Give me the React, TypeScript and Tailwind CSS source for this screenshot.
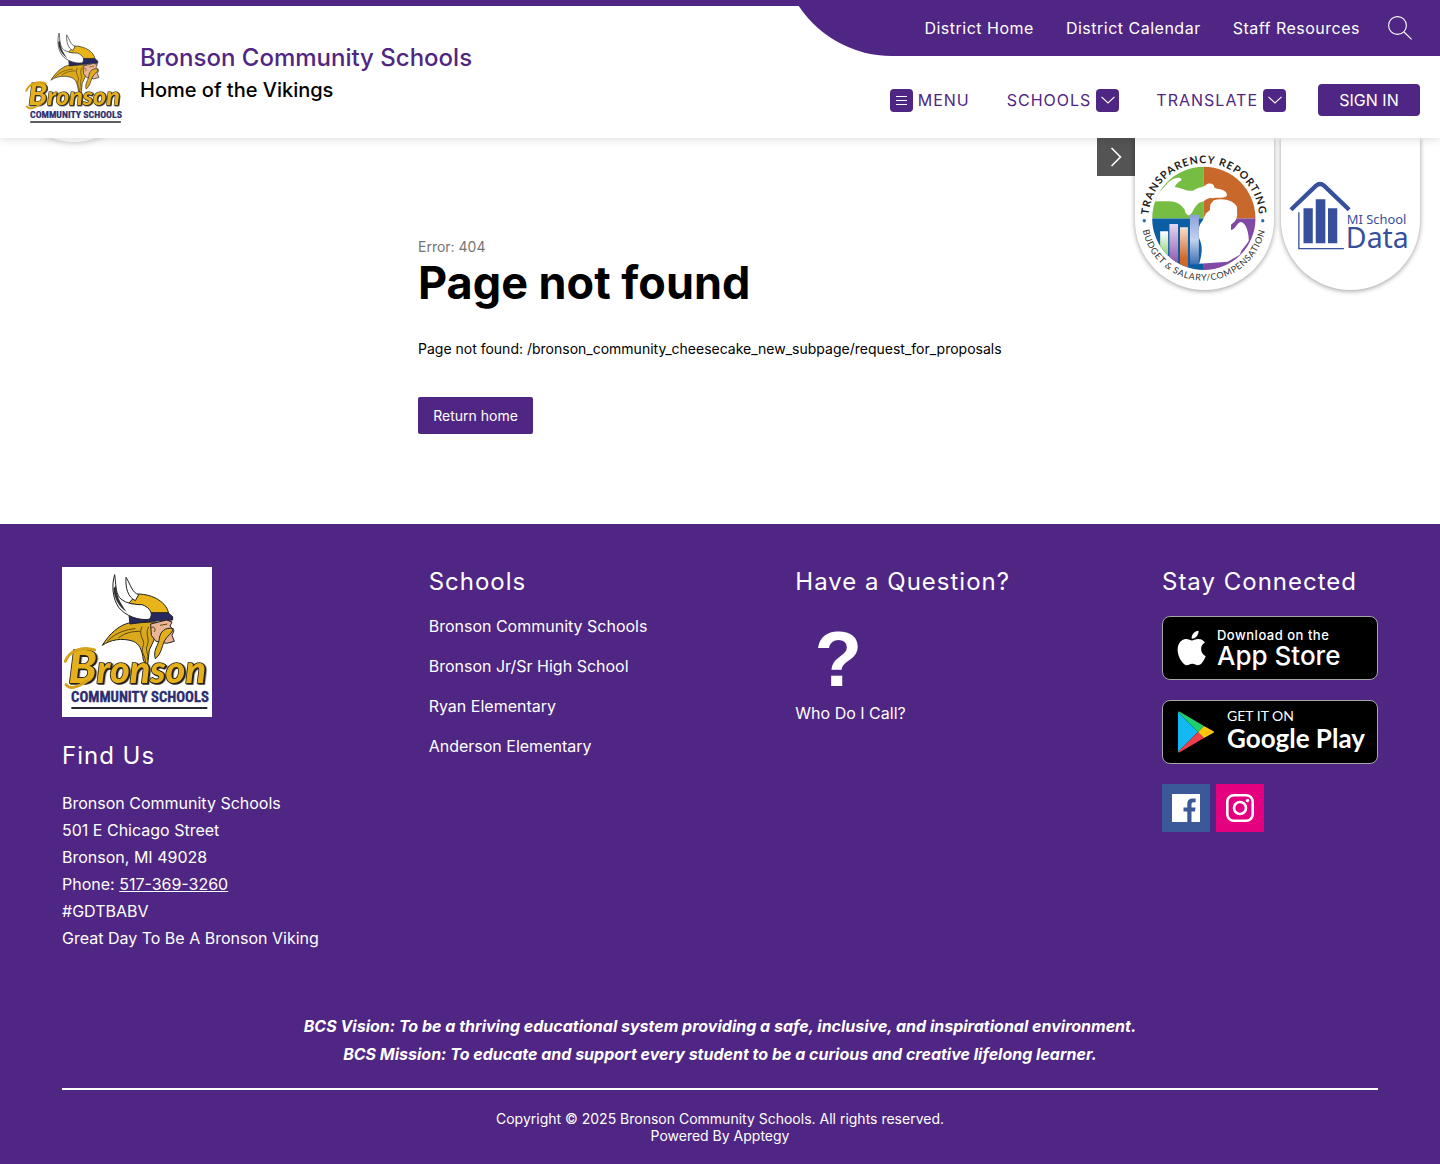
import React from "react";

const schools = [
  "Bronson Community Schools",
  "Bronson Jr/Sr High School",
  "Ryan Elementary",
  "Anderson Elementary",
];

function VikingLogo({ className }: { className: string }) {
  return (
    <svg viewBox="36 21 450 450" className={className} role="img" aria-label="Bronson Community Schools logo">
      <rect x="36" y="21" width="450" height="450" fill="#fff" />
      <g stroke="#222" strokeWidth="3" strokeLinejoin="round">
        <path d="M262 102C310 102 352 128 356 162L300 160C290 140 265 134 236 130Z" fill="#e8b41a" />
        <path d="M240 188C205 196 178 222 157 256C180 240 215 232 250 244C268 252 276 268 280 300L292 322L298 270L312 240L318 186Z" fill="#dba91c" />
        <path d="M237 166L240 192L304 184L368 180V170L354 158L302 158Z" fill="#27285f" />
        <path d="M302 192L350 180L366 186L360 198L372 212L366 226L373 244L350 250L318 244L304 226Z" fill="#e9b596" />
        <path d="M370 206C345 200 330 216 328 236C326 256 308 270 316 296C334 282 334 262 344 242C350 228 366 222 370 206Z" fill="#e2ae1b" />
        <path d="M194 44C184 76 188 116 206 142C226 168 266 182 298 178C312 162 300 142 276 134C242 134 220 126 208 112C196 96 198 70 194 44Z" fill="#fff" />
        <path d="M228 52C226 84 234 112 256 122L266 104C246 98 242 74 228 52Z" fill="#fff" />
      </g>
      <g fill="none" stroke="#5b4713" strokeWidth="3">
        <path d="M172 244C200 216 230 208 256 206M205 234C225 218 246 214 270 214M276 200C262 230 290 240 278 262C272 280 290 290 286 312M296 200C284 224 300 232 292 256C284 270 298 284 292 300" />
        <path d="M302 204C312 196 320 208 312 216M330 196L352 192" />
      </g>
      <path d="M190 84C192 116 206 140 230 156C208 124 200 108 198 78Z" fill="#333" />
      <text
        x="55"
        y="368"
        fontFamily="Lato, sans-serif"
        fontWeight="900"
        fontStyle="italic"
        fontSize="113"
        fill="#e5b01c"
        stroke="#27231a"
        strokeWidth="5"
        paintOrder="stroke"
        className="drop-shadow-[4px_3px_0_#27231a]"
      >
        <tspan fontSize="138">B</tspan>ronson
      </text>
      <path d="M46 304C58 272 96 258 134 270M48 374C60 390 86 380 112 362" fill="none" stroke="#d6a41c" strokeWidth="9" strokeLinecap="round" />
      <text x="270" y="427" textAnchor="middle" fontFamily="'Roboto Condensed', 'Liberation Sans Narrow', Roboto, sans-serif" fontWeight="700" fontSize="44" fill="#2c2d70" stroke="#2c2d70" strokeWidth="1">
        COMMUNITY SCHOOLS
      </text>
      <path d="M64 444H472" stroke="#26272f" strokeWidth="6" />
    </svg>
  );
}

function TransparencyLogo() {
  return (
    <svg viewBox="0 0 420 459" className="w-full" role="img" aria-label="Transparency Reporting, Budget and Salary/Compensation">
      <defs>
        <clipPath id="disc"><circle cx="208" cy="243" r="156" /></clipPath>
        <path id="arc-top" d="M41 243A167 167 0 0 1 375 243" />
        <path id="arc-bottom" d="M20 243A188 188 0 0 0 396 243" />
        <linearGradient id="g1" x2="0" y2="1"><stop stopColor="#fff" /><stop offset="1" stopColor="#6fbf44" /></linearGradient>
        <linearGradient id="g2" x2="0" y2="1"><stop stopColor="#e4d8f0" /><stop offset="1" stopColor="#7b3fa0" /></linearGradient>
        <linearGradient id="g3" x2="0" y2="1"><stop stopColor="#f7e0d0" /><stop offset=".7" stopColor="#d2692a" /></linearGradient>
        <linearGradient id="g4" x2="0" y2="1"><stop stopColor="#8b9fdb" /><stop offset=".5" stopColor="#c3d2ee" /><stop offset="1" stopColor="#3a6db0" /></linearGradient>
      </defs>
      <g clipPath="url(#disc)">
        <path d="M50 84H208V243H50Z" fill="#76bd43" />
        <path d="M208 84H366V243H208Z" fill="#c8682a" />
        <path d="M50 243H208V402H50Z" fill="#0b5da4" />
        <path d="M208 243H366V402H208Z" fill="#804aa5" />
        <path d="M76 160C90 150 94 138 106 130C124 116 144 118 140 128C128 134 122 144 120 148C146 152 160 164 178 158C190 148 206 150 214 142C224 134 240 138 240 150C256 156 276 154 278 172C276 184 246 178 234 182C216 178 210 196 196 194C180 206 178 218 170 228C162 240 152 230 150 216C136 198 126 194 112 192C90 190 70 192 44 192Z" fill="#fff" />
        <path d="M238 188C268 180 300 190 308 208C308 232 314 246 290 262L290 278C306 276 306 256 320 254C336 256 344 288 344 310C334 328 318 340 318 352L280 374L194 380C202 350 206 330 194 304C190 280 192 262 204 250L214 228L226 218L228 200Z" fill="#fff" />
        <path d="M76 282H100V382H76Z" fill="url(#g1)" />
        <path d="M104 260H130V402H104Z" fill="url(#g2)" />
        <path d="M136 270H160V402H136Z" fill="url(#g3)" />
        <path d="M166 232H193V382H166Z" fill="url(#g4)" />
      </g>
      <circle cx="28" cy="250" r="5" fill="#2a6fb0" />
      <circle cx="386" cy="250" r="5" fill="#2a6fb0" />
      <text fontFamily="Lato, sans-serif" fontWeight="700" fontSize="32" letterSpacing="3" fill="#1c1c1c">
        <textPath href="#arc-top" startOffset="50%" textAnchor="middle">TRANSPARENCY REPORTING</textPath>
      </text>
      <text fontFamily="Lato, sans-serif" fontSize="27" letterSpacing="2" fill="#333">
        <textPath href="#arc-bottom" startOffset="50%" textAnchor="middle">BUDGET &amp; SALARY/COMPENSATION</textPath>
      </text>
    </svg>
  );
}

function SchoolDataLogo() {
  return (
    <svg viewBox="0 0 420 459" className="w-full" role="img" aria-label="MI School Data">
      <g fill="none" stroke="#37509b">
        <path d="M30 217L106 144Q118 134 130 144L206 217" strokeWidth="13" />
        <path d="M54 224V334H190" strokeWidth="4" />
      </g>
      <path d="M68 212H96V318H68ZM105 185H134V318H105ZM142 212H170V318H142Z" fill="#37509b" />
      <g fontFamily="'Noto Sans', 'Open Sans', sans-serif" fill="#37509b">
        <text x="199" y="260" fontSize="39">MI School</text>
        <text x="196" y="331" fontSize="86">Data</text>
      </g>
    </svg>
  );
}

function Chevron() {
  return (
    <span className="flex size-[23px] items-center justify-center rounded bg-[#4f2683]">
      <svg viewBox="0 0 14 8" className="w-3.5" fill="none" stroke="#fff" strokeWidth="1.1" aria-hidden="true">
        <path d="M.5 .8L7 7L13.5 .8" />
      </svg>
    </span>
  );
}

function Header() {
  return (
    <header className="relative z-20">
      <div className="absolute -bottom-1 left-[9px] size-[130px] rounded-full bg-white shadow-[0_2px_5px_rgba(0,0,0,0.15)]" />
      <div className="relative flex justify-between border-t-6 border-[#4f2683] bg-white shadow-[0_2px_8px_rgba(0,0,0,0.12)]">
        <a href="#home" className="flex items-center gap-4 pt-3 pl-6">
          <VikingLogo className="size-[100px]" />
          <span className="mb-2 flex flex-col">
            <span className="text-2xl leading-8 font-medium text-[#4f2683]">Bronson Community Schools</span>
            <span className="text-xl leading-8 font-medium text-black">Home of the Vikings</span>
          </span>
        </a>
        <div className="-mt-1.5 flex flex-col items-end">
          <div className="flex h-14">
            <svg viewBox="0 0 97 56" className="h-14 w-[97px]" aria-hidden="true">
              <path d="M0 0A112 112 0 0 0 97 56V0Z" fill="#4f2683" />
            </svg>
            <nav aria-label="District" className="flex items-center gap-8 bg-[#4f2683] pr-7 pl-8 text-base tracking-[0.5px] text-white">
              <a href="#district">District Home</a>
              <a href="#calendar">District Calendar</a>
              <a href="#staff">Staff Resources</a>
              <button aria-label="Search" className="-ml-1">
                <svg viewBox="0 0 24 24" className="size-6" fill="none" stroke="#fff" strokeWidth="1.1" aria-hidden="true">
                  <circle cx="9.5" cy="9.5" r="8.9" />
                  <path d="M16 16L23.6 23.4" />
                </svg>
              </button>
            </nav>
          </div>
          <div className="flex items-center gap-[37px] pt-7 pr-5 pb-[22px] text-base tracking-[1px] text-[#4f2683]">
            <button className="flex items-center gap-[5px]">
              <span className="flex size-[23px] items-center justify-center rounded bg-[#4f2683]">
                <svg viewBox="0 0 11 9" className="h-[9px] w-[11px]" fill="#fff" aria-hidden="true">
                  <path d="M0 0H11V1H0ZM0 4H11V5H0ZM0 8H11V9H0Z" />
                </svg>
              </span>
              MENU
            </button>
            <button className="flex items-center gap-[5px]">SCHOOLS<Chevron /></button>
            <button className="flex items-center gap-[5px]">TRANSLATE<Chevron /></button>
            <button className="-ml-[5px] h-8 w-[102px] rounded bg-[#4f2683] tracking-normal text-white">SIGN IN</button>
          </div>
        </div>
      </div>
    </header>
  );
}

function QuickLinks() {
  return (
    <aside aria-label="Quick links" className="absolute top-0 right-5 flex items-start">
      <button aria-label="Hide quick links" className="flex size-[38px] items-center justify-center bg-[#545454]">
        <svg viewBox="0 0 12 20" className="h-5 w-3" fill="none" stroke="#fff" strokeWidth="1.6" aria-hidden="true">
          <path d="M1.5 1L10.5 10L1.5 19" />
        </svg>
      </button>
      <div className="flex gap-[7px]">
        <a href="#transparency" className="w-[139px] rounded-b-full bg-white shadow-[0_1px_5px_rgba(0,0,0,0.4)]"><TransparencyLogo /></a>
        <a href="#data" className="w-[139px] rounded-b-full bg-white shadow-[0_1px_5px_rgba(0,0,0,0.4)]"><SchoolDataLogo /></a>
      </div>
    </aside>
  );
}

const heading = "text-2xl leading-[30px] tracking-[1px]";

function Footer() {
  return (
    <footer className="bg-[#4f2683] px-[62px] pt-[43px] pb-5 text-white">
      <div className="grid grid-cols-[1fr_1fr_1fr_216px] text-base">
        <section>
          <VikingLogo className="size-[150px]" />
          <h2 className={`${heading} mt-6`}>Find Us</h2>
          <address className="mt-[19px] leading-[27px] not-italic">
            Bronson Community Schools<br />
            501 E Chicago Street<br />
            Bronson, MI 49028<br />
            Phone: <a href="tel:517-369-3260" className="underline">517-369-3260</a><br />
            #GDTBABV<br />
            Great Day To Be A Bronson Viking
          </address>
        </section>
        <section>
          <h2 className={heading}>Schools</h2>
          <ul className="mt-[17px] flex flex-col gap-4">
            {schools.map((name) => (
              <li key={name}><a href="#school">{name}</a></li>
            ))}
          </ul>
        </section>
        <section>
          <h2 className={heading}>Have a Question?</h2>
          <a href="#contact" className="mt-5 inline-flex flex-col">
            <span aria-hidden="true" className="w-[86px] text-center font-['Liberation_Sans'] text-[78px] leading-[84px] font-bold">?</span>
            <span>Who Do I Call?</span>
          </a>
        </section>
        <section>
          <h2 className={heading}>Stay Connected</h2>
          <div className="mt-[19px] flex flex-col gap-5">
            <a href="#appstore" className="flex h-16 items-center gap-2.5 rounded-lg border border-[#a6a6a6] bg-black pl-[13px]">
              <svg viewBox="4 2 16.5 20" className="h-[38px] w-8" fill="#fff" aria-hidden="true">
                <path d="M17.05 12.54c-.02-2.3 1.88-3.4 1.96-3.46-1.07-1.56-2.73-1.78-3.32-1.8-1.41-.14-2.76.83-3.48.83-.72 0-1.82-.81-3-.79-1.54.02-2.96.9-3.76 2.28-1.6 2.78-.41 6.9 1.15 9.16.76 1.1 1.67 2.34 2.86 2.3 1.15-.05 1.58-.74 2.97-.74 1.38 0 1.78.74 2.99.72 1.24-.02 2.02-1.12 2.78-2.23.87-1.28 1.23-2.52 1.25-2.58-.03-.01-2.38-.91-2.4-3.69ZM14.76 5.78c.63-.77 1.06-1.83.94-2.9-.91.04-2.02.61-2.67 1.37-.59.68-1.1 1.77-.96 2.81 1.02.08 2.05-.52 2.69-1.28Z" />
              </svg>
              <span className="-ml-px flex flex-col">
                <span className="text-[13px] leading-4 font-medium tracking-[0.5px]">Download on the</span>
                <span className="text-[26px] leading-[26px] font-medium">App Store</span>
              </span>
            </a>
            <a href="#googleplay" className="flex h-16 items-center gap-3 rounded-lg border border-[#a6a6a6] bg-black pl-3.5">
              <svg viewBox="0 0 38 42" className="h-[42px] w-[38px]" aria-hidden="true">
                <path d="M1 1V41L21 21Z" fill="#12b9f2" />
                <path d="M1 1Q2 0 4 1.500L27 15L21 21Z" fill="#1fd16c" />
                <path d="M1 41Q2 42 4 40.500L27 27L21 21Z" fill="#ee3f4b" />
                <path d="M27 15L36 20Q38 21 36 22L27 27L21 21Z" fill="#fdc40a" />
              </svg>
              <span className="flex flex-col pb-1 font-['Lato']">
                <span className="text-sm leading-4">GET IT ON</span>
                <span className="text-[26px] leading-7 font-bold">Google Play</span>
              </span>
            </a>
            <div className="flex gap-1.5">
              <a href="#facebook" aria-label="Facebook" className="flex size-12 items-center justify-center bg-[#3b5998]">
                <svg viewBox="0 0 28 28" className="size-7" aria-hidden="true">
                  <path d="M0 0H28V28H19.500V17.500H23L23.600 13.500H19.500V10.500C19.500 9 20.200 8.300 21.500 8.300H23.600V4.500H20.500C17 4.500 15.300 6.500 15.300 9.700V13.500H11.500V17.500H15.300V28H0Z" fill="#fff" />
                </svg>
              </a>
              <a href="#instagram" aria-label="Instagram" className="flex size-12 items-center justify-center bg-[#e4007f]">
                <svg viewBox="0 0 28 28" className="size-7" fill="none" stroke="#fff" strokeWidth="2.600" aria-hidden="true">
                  <rect x="1.300" y="1.300" width="25.400" height="25.400" rx="6.500" />
                  <circle cx="14" cy="14" r="6" />
                  <circle cx="21.500" cy="6.500" r="1.700" fill="#fff" stroke="none" />
                </svg>
              </a>
            </div>
          </div>
        </section>
      </div>
      <p className="mt-[60px] text-center text-base leading-7 font-bold italic">
        BCS Vision: To be a thriving educational system providing a safe, inclusive, and inspirational environment.<br />
        BCS Mission: To educate and support every student to be a curious and creative lifelong learner.
      </p>
      <hr className="mt-5 border-t-2 border-white" />
      <p className="mt-5 text-center text-sm leading-[17px]">
        Copyright © 2025 Bronson Community Schools. All rights reserved.<br />
        Powered By <a href="#apptegy">Apptegy</a>
      </p>
    </footer>
  );
}

export default function App() {
  return (
    <div className="bg-white font-['Inter',sans-serif]">
      <Header />
      <main className="relative pt-[100px] pb-[90px]">
        <QuickLinks />
        <div className="mx-auto w-[604px] max-w-full">
          <p className="text-sm leading-[18px] text-[#757575]">Error: 404</p>
          <h1 className="text-[45px] leading-[54px] font-bold text-black">Page not found</h1>
          <p className="mt-[29px] text-sm leading-5 text-black">
            Page not found: /bronson_community_cheesecake_new_subpage/request_for_proposals
          </p>
          <a href="#home" className="mt-[38px] inline-flex h-[37px] w-[115px] items-center justify-center rounded-xs bg-[#4f2683] text-sm text-white">
            Return home
          </a>
        </div>
      </main>
      <Footer />
    </div>
  );
}
